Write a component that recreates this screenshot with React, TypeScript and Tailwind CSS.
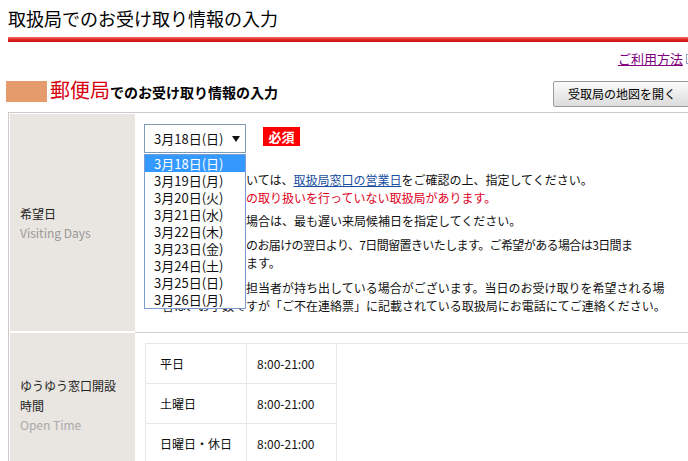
import React from "react";

const dates = [
  "3月18日(日)",
  "3月19日(月)",
  "3月20日(火)",
  "3月21日(水)",
  "3月22日(木)",
  "3月23日(金)",
  "3月24日(土)",
  "3月25日(日)",
  "3月26日(月)",
];

const hours = [
  { day: "平日", time: "8:00-21:00" },
  { day: "土曜日", time: "8:00-21:00" },
  { day: "日曜日・休日", time: "8:00-21:00" },
];

const DateSelect = () => (
  <div className="flex items-start">
    <div className="w-[102px] h-[29px] border border-[#7f9db9] flex items-center justify-between pl-[9px] pr-[5px] text-[13px] leading-[16px] bg-white">
      <span>{dates[0]}</span>
      <svg width="8" height="6" viewBox="0 0 8 6">
        <path d="M0 0 L8 0 L4 6 Z" fill="#111" />
      </svg>
    </div>
    <span className="ml-[17px] mt-[3px] w-[37px] h-[19px] bg-[#ff0000] text-white font-bold text-[13px] leading-[19px] text-center">
      必須
    </span>
  </div>
);

const DateList = () => (
  <ul className="absolute left-[9px] top-[40px] z-10 w-[102px] h-[155px] border border-[#7a9cd3] bg-white">
    {dates.map((d, i) => (
      <li
        key={d}
        className={`h-[17px] pl-[9px] text-[13px] leading-[17px] ${
          i === 0 ? "bg-[#3399ff] text-white" : "text-[#111]"
        }`}
      >
        {d}
      </li>
    ))}
  </ul>
);

const Notes = () => (
  <div className="mt-[18px] ml-[6px] text-[12px] leading-[18px] text-[#111] whitespace-nowrap">
    <p className="pl-[12px] -indent-[12px]">
      ・受取希望日については、
      <a className="text-[#1a4fa0] underline">取扱局窓口の営業日</a>
      をご確認の上、指定してください。
      <br />
      <span className="text-[#e0001b]">
        ※土曜・日曜日の取り扱いを行っていない取扱局があります。
      </span>
    </p>
    <p className="mt-[5px] pl-[12px] -indent-[12px]">
      ・複数のお荷物の場合は、最も遅い来局候補日を指定してください。
    </p>
    <p className="mt-[6px] pl-[12px] -indent-[12px]">
      ・取扱局へお荷物
      <span className="tracking-[-0.6px]">
        のお届けの翌日より、7日間留置きいたします。ご希望がある場合は3日間ま
      </span>
      <br />
      で延長をいたします。
    </p>
    <p className="mt-[7px] pl-[12px] -indent-[12px]">
      ・当日はお荷物を担当者が持ち出している場合がございます。当日のお受け取りを希望される場
      <br />
      合は、お手数ですが「ご不在連絡票」に記載されている取扱局にお電話にてご連絡ください。
    </p>
  </div>
);

const App = () => {
  return (
    <div className="w-[688px] h-[461px] overflow-hidden bg-white text-[#111] font-['Noto_Sans_CJK_JP',sans-serif]">
      <div className="w-[700px] ml-[8px]">
        <h1 className="pt-[6px] text-[18px] leading-[24px] font-normal text-black">
          取扱局でのお受け取り情報の入力
        </h1>
        <div className="mt-[7px] h-[5px] bg-gradient-to-b from-[#f46a6a] via-[#e32222] to-[#c81414]" />

        <div className="mt-[9px] flex justify-end items-center pr-[12px]">
          <a className="text-[13px] leading-[16px] text-[#800080] underline">
            ご利用方法
          </a>
          <svg className="ml-[3px]" width="10" height="10" viewBox="0 0 10 10">
            <rect x="0.5" y="0.5" width="9" height="9" fill="none" stroke="#8fa3c6" />
            <path d="M3 7 L7 3 M4 3 L7 3 L7 6" stroke="#8fa3c6" fill="none" />
          </svg>
        </div>

        <div className="mt-[12px] h-[30px] flex justify-between pr-[15px]">
          <div className="flex items-baseline self-start pt-[1px] -ml-[2px]">
            <span className="inline-block w-[41px] h-[21px] bg-[#e69b6c] mr-[3px] self-center" />
            <span className="text-[20px] leading-[20px] text-[#d8000f]">郵便局</span>
            <span className="text-[14px] leading-[20px] font-bold text-black">
              でのお受け取り情報の入力
            </span>
          </div>
          <button className="self-center w-[140px] h-[26px] border border-[#9a9a9a] rounded-[2px] bg-gradient-to-b from-[#fbfbfb] to-[#dcdcdc] text-[12px] leading-[14px] text-left pl-[14px] text-black">
            受取局の地図を開く
          </button>
        </div>

        <div className="mt-[3px] border border-[#cccccc] p-px">
          <div className="flex h-[219px]">
            <div className="w-[125px] h-[217px] bg-[#e9e5e1] flex flex-col justify-center pl-[10px]">
              <div className="text-[12px] leading-[20px] text-[#222]">希望日</div>
              <div className="text-[12px] leading-[18px] text-[#999]">Visiting Days</div>
            </div>
            <div className="relative flex-1 border-b border-[#cfcfcf] pl-[9px] pt-[10px]">
              <DateSelect />
              <DateList />
              <Notes />
            </div>
          </div>

          <div className="flex">
            <div className="w-[125px] bg-[#e9e5e1] flex flex-col justify-center pl-[10px]">
              <div className="text-[12px] leading-[20px] text-[#222]">
                ゆうゆう窓口開設
                <br />
                時間
              </div>
              <div className="text-[12px] leading-[18px] text-[#aaa]">Open Time</div>
            </div>
            <div className="flex-1 pl-[10px] pt-[10px] pb-[12px]">
              <div className="grid grid-cols-[101px_90px] border-l border-t border-[#e6e6e6]">
                {hours.map((h) => (
                  <React.Fragment key={h.day}>
                    <div className="h-[40px] border-r border-b border-[#e6e6e6] flex items-center pl-[14px] text-[12px] text-[#111]">
                      {h.day}
                    </div>
                    <div className="h-[40px] border-r border-b border-[#e6e6e6] flex items-center pl-[10px] text-[12px] text-[#111]">
                      {h.time}
                    </div>
                  </React.Fragment>
                ))}
              </div>
            </div>
          </div>
        </div>
      </div>
    </div>
  );
};

export default App;
